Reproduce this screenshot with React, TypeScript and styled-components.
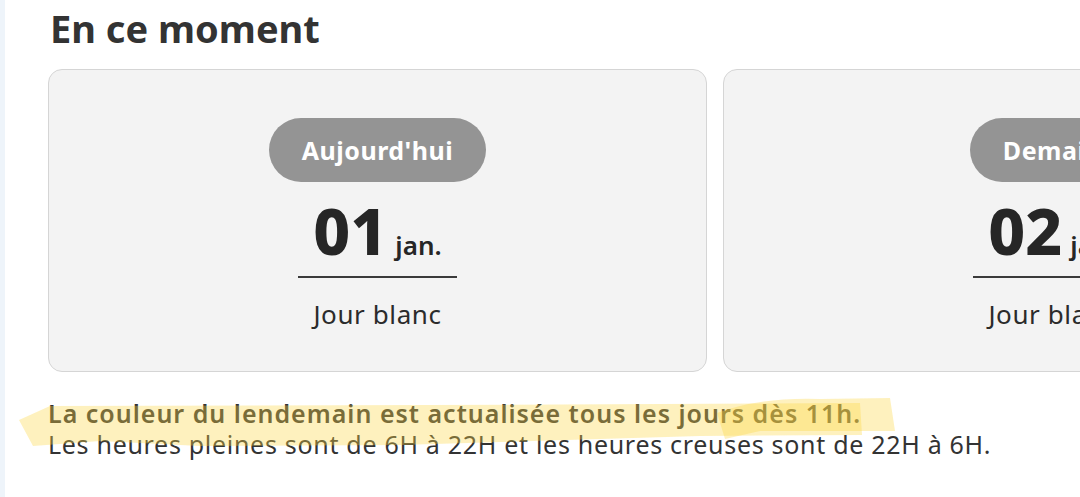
import React from 'react';
import styled, { createGlobalStyle } from 'styled-components';

const GlobalStyle = createGlobalStyle`
  html, body {
    margin: 0;
    padding: 0;
    background: #ffffff;
    overflow: hidden;
  }
  body {
    font-family: "Noto Sans", "Open Sans", sans-serif;
    color: #333333;
  }
`;

interface DayInfo {
  label: string;
  day: string;
  month: string;
  color: string;
}

const days: DayInfo[] = [
  { label: "Aujourd'hui", day: '01', month: 'jan.', color: 'Jour blanc' },
  { label: 'Demain', day: '02', month: 'jan.', color: 'Jour blanc' },
];

export default function App() {
  return (
    <Page>
      <GlobalStyle />
      <Content>
        <Title>En ce moment</Title>
        <CardRow>
          {days.map((d) => (
            <DayCard key={d.label}>
              <Pill>{d.label}</Pill>
              <DateLine>
                <DayNum>{d.day}</DayNum>
                <Month>{d.month}</Month>
              </DateLine>
              <Divider />
              <ColorName>{d.color}</ColorName>
            </DayCard>
          ))}
        </CardRow>
        <Notes>
          <Highlight viewBox="0 0 1080 60" aria-hidden="true">
            <path d="M19,22 L50,8 L430,7 L860,5 L862,37 L700,38 L400,47 L200,48 L100,43 L33,48 Z" />
            <path d="M717,15 Q760,-1 820,1 L890,0 L895,33 L760,33 L725,41 Z" />
          </Highlight>
          <BoldNote>La couleur du lendemain est actualisée tous les jours dès 11h.</BoldNote>
          <Note>Les heures pleines sont de 6H à 22H et les heures creuses sont de 22H à 6H.</Note>
        </Notes>
      </Content>
    </Page>
  );
}

const Page = styled.div`
  width: 1080px;
  height: 497px;
  border-left: 5px solid #eef4fa;
  box-sizing: border-box;
  overflow: hidden;
`;

const Content = styled.div`
  padding: 0 0 0 43px;
  display: flex;
  flex-direction: column;
`;

const Title = styled.h1`
  margin: 4px 0 0 2px;
  font-size: 38px;
  line-height: 48px;
  font-weight: 700;
  color: #333333;
`;

const CardRow = styled.div`
  display: flex;
  gap: 16px;
  margin-top: 17px;
`;

const DayCard = styled.div`
  flex: 0 0 659px;
  height: 303px;
  box-sizing: border-box;
  background: #f3f3f3;
  border: 1px solid #d5d5d5;
  border-radius: 14px;
  display: flex;
  flex-direction: column;
  align-items: center;
  padding-top: 48px;
`;

const Pill = styled.div`
  height: 64px;
  padding: 0 33px;
  border-radius: 32px;
  background: #949494;
  color: #ffffff;
  font-size: 25px;
  font-weight: 700;
  letter-spacing: 0.5px;
  display: flex;
  align-items: center;
  justify-content: center;
`;

const DateLine = styled.div`
  display: flex;
  align-items: baseline;
  gap: 8px;
  margin-top: 14px;
`;

const DayNum = styled.span`
  font-size: 64px;
  line-height: 70px;
  font-weight: 800;
  color: #262626;
`;

const Month = styled.span`
  font-size: 26px;
  font-weight: 600;
  color: #262626;
`;

const Divider = styled.div`
  width: 159px;
  height: 2px;
  background: #3a3a3a;
  margin-top: 10px;
`;

const ColorName = styled.div`
  margin-top: 18px;
  font-size: 26px;
  letter-spacing: 0.6px;
  color: #2b2b2b;
`;

const Notes = styled.div`
  position: relative;
  margin-top: 26px;
  margin-left: -48px;
  padding-left: 48px;
`;

const Highlight = styled.svg`
  position: absolute;
  left: 0;
  top: 0;
  width: 1080px;
  height: 60px;
  pointer-events: none;
  path {
    fill: rgba(252, 214, 70, 0.35);
  }
`;

const BoldNote = styled.div`
  font-size: 25px;
  line-height: 31px;
  font-weight: 600;
  letter-spacing: 1px;
  color: #333333;
`;

const Note = styled.div`
  font-size: 25px;
  line-height: 31px;
  letter-spacing: 0.7px;
  color: #333333;
`;
